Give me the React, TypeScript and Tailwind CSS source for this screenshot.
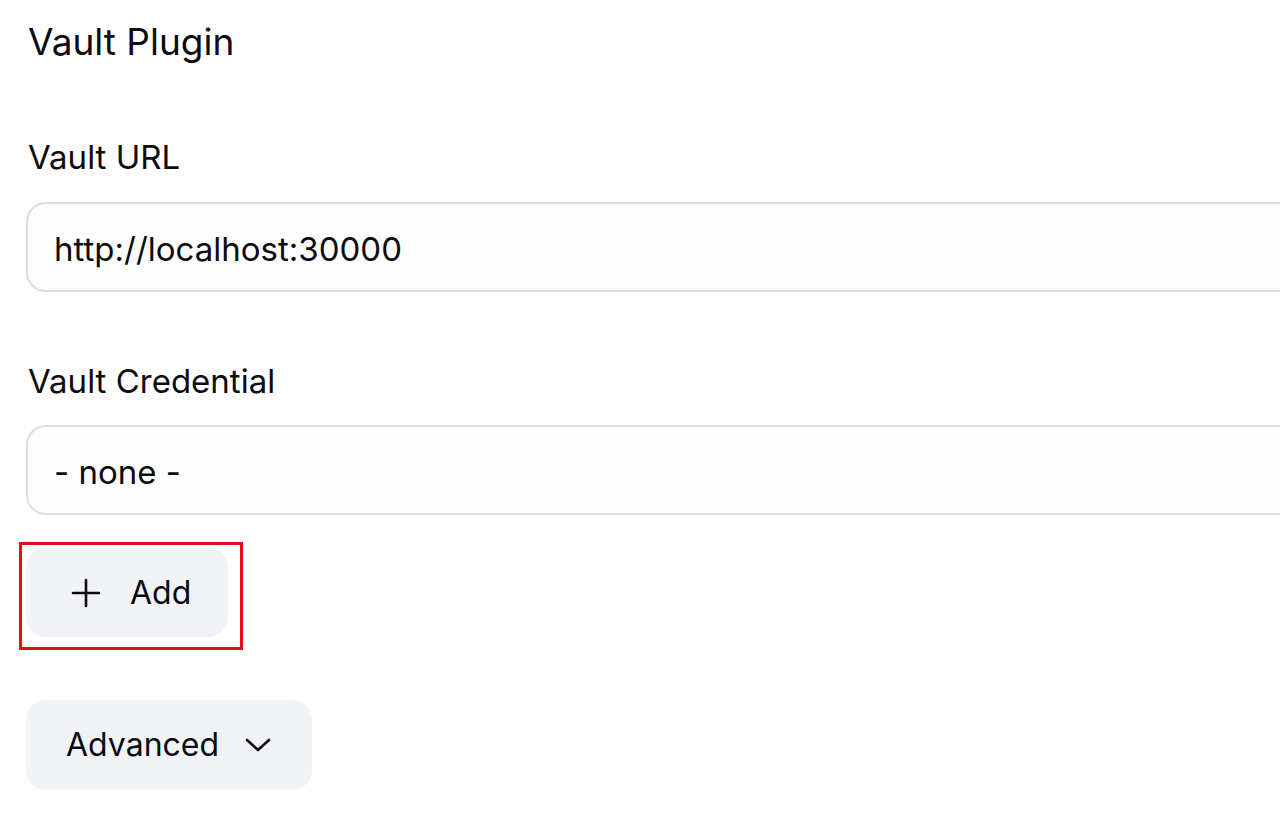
import React from 'react';

const PlusIcon: React.FC = () => (
  <svg width="30" height="30" viewBox="0 0 30 30" fill="none" stroke="currentColor" strokeWidth="2.6" strokeLinecap="round">
    <path d="M15 2v26M2 15h26" />
  </svg>
);

const ChevronDown: React.FC = () => (
  <svg width="26" height="14" viewBox="0 0 26 14" fill="none" stroke="currentColor" strokeWidth="2.6" strokeLinecap="round" strokeLinejoin="round">
    <path d="M2 2l11 10L24 2" />
  </svg>
);

const Field: React.FC<{ value: string; className?: string }> = ({ value, className = '' }) => (
  <div
    className={`flex items-center w-[1320px] h-[90px] rounded-[20px] border-2 border-[#d9dee7] bg-[#fdfdfd] pl-[26px] pt-[6px] text-[33px] text-[#0b0b10] ${className}`}
  >
    {value}
  </div>
);

export default function App() {
  return (
    <div
      className="min-h-screen w-full overflow-hidden bg-white pl-[26px] text-[#0b0b10]"
      style={{ fontFamily: 'Inter, "Noto Sans", sans-serif' }}
    >
      <h1 className="mt-[19px] text-[37px] leading-[45px] font-normal pl-[2px]">Vault Plugin</h1>

      <div className="mt-[69px] text-[33px] leading-[48px] pl-[2px]">Vault URL</div>
      <Field value="http://localhost:30000" className="mt-[21px]" />

      <div className="mt-[65px] text-[33px] leading-[48px] pl-[2px]">Vault Credential</div>
      <Field value="- none -" className="mt-[20px]" />

      <div className="mt-[27px] ml-[-7px] w-fit border-[3px] border-[#e0101a] pl-[4px] pt-[3px] pr-[12px] pb-[10px]">
        <button className="flex items-center w-[202px] h-[89px] rounded-[20px] bg-[#f2f3f7] pl-[45px] gap-[29px] text-[32px]">
          <PlusIcon />
          <span>Add</span>
        </button>
      </div>

      <button className="mt-[50px] flex items-center w-[286px] h-[90px] rounded-[20px] bg-[#f2f3f7] pl-[40px] gap-[26px] text-[32px]">
        <span>Advanced</span>
        <ChevronDown />
      </button>
    </div>
  );
}
